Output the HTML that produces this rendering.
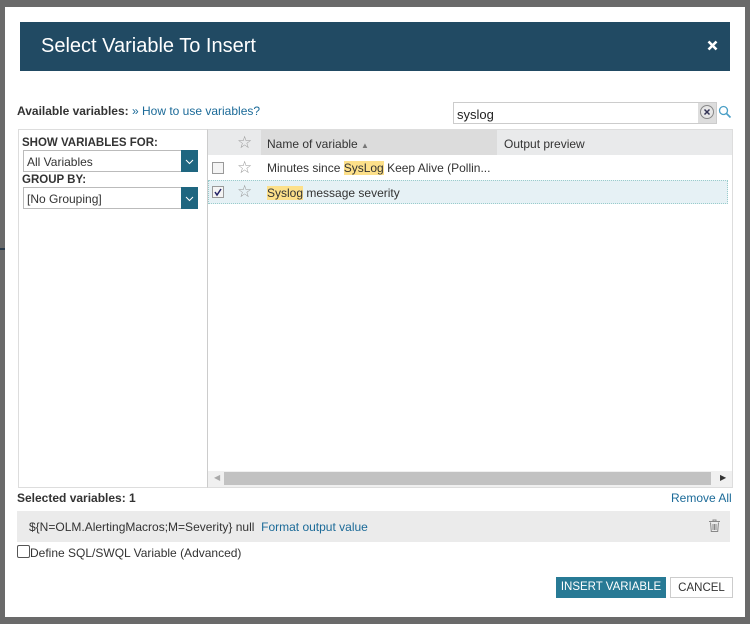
<!DOCTYPE html>
<html><head><style>
*{box-sizing:border-box;margin:0;padding:0}
body{width:750px;height:624px;background:#6a6a6a;font-family:"Liberation Sans",sans-serif;font-size:12px;color:#333;position:relative;overflow:hidden}
.a{position:absolute}
.dlg{left:5px;top:7px;width:740px;height:610px;background:#fff}
.hdr{left:20px;top:22px;width:710px;height:49px;background:#214a63;color:#fff;font-size:20px;padding:13px 0 0 21px}
.lnk{color:#1b6a98}
.sel{border:1px solid #bbb;height:22px;background:#fff;padding:4px 0 0 3px;font-size:12px}
.dd{position:absolute;right:-1px;top:-1px;width:17px;height:22px;background:#1f6680}
.cb{width:12px;height:12px;border:1px solid #999;background:#f4f4f4}
.star{color:#999;font-size:15px}
.hl{background:#fde08a}
</style></head><body>
<div class="a" style="left:0;top:248px;width:5px;height:2px;background:#2a3b4a"></div>
<div class="a dlg"></div>
<div class="a hdr">Select Variable To Insert</div>
<div class="a" style="left:707px;top:40px"><svg width="11" height="11"><path d="M1.5 1.5l8 8M9.5 1.5l-8 8" stroke="#fff" stroke-width="2.6"/></svg></div>
<div class="a" style="left:17px;top:104px;font-size:12px"><b>Available variables:</b> <span class="lnk">» How to use variables?</span></div>
<div class="a" style="left:453px;top:102px;width:264px;height:22px;border:1px solid #ccc;padding:4px 0 0 3px;font-size:13px;color:#222">syslog</div>
<div class="a" style="left:698px;top:103px;width:18px;height:20px;background:#ddd"></div>
<div class="a" style="left:700px;top:105px;width:14px;height:14px;border-radius:50%;border:1px solid #888;background:#e6e6e6"><svg width="12" height="12" style="position:absolute;left:0;top:0"><path d="M3.5 3.5l5 5M8.5 3.5l-5 5" stroke="#335" stroke-width="1.5"/></svg></div>
<div class="a" style="left:718px;top:105px"><svg width="14" height="14"><circle cx="5.5" cy="5.5" r="4" stroke="#4a9fc6" stroke-width="1.3" fill="none"/><path d="M8.5 8.5l4 4" stroke="#4a9fc6" stroke-width="1.6"/></svg></div>
<div class="a" style="left:18px;top:129px;width:190px;height:359px;border:1px solid #ddd"></div>
<div class="a" style="left:22px;top:137px;font-weight:bold;font-size:11.5px">SHOW VARIABLES FOR:</div>
<div class="a sel" style="left:23px;top:150px;width:175px">All Variables<div class="dd"><svg width="17" height="22"><path d="M5 10l3.5 3.5L12 10" stroke="#fff" fill="none"/></svg></div></div>
<div class="a" style="left:22px;top:174px;font-weight:bold;font-size:11.5px">GROUP BY:</div>
<div class="a sel" style="left:23px;top:187px;width:175px">[No Grouping]<div class="dd"><svg width="17" height="22"><path d="M5 10l3.5 3.5L12 10" stroke="#fff" fill="none"/></svg></div></div>
<div class="a" style="left:207px;top:129px;width:526px;height:359px;border:1px solid #ddd;border-left:1px solid #ccc"></div>
<div class="a" style="left:208px;top:130px;width:524px;height:25px;background:#e9eaeb"></div>
<div class="a" style="left:261px;top:130px;width:236px;height:25px;background:#dcdcdc;padding:7px 0 0 6px">Name of variable <span style="font-size:8px;color:#777">▲</span></div>
<div class="a" style="left:504px;top:137px">Output preview</div>
<div class="a star" style="left:237px;top:133px;font-size:17px">☆</div>
<div class="a cb" style="left:212px;top:162px"></div>
<div class="a star" style="left:237px;top:158px;font-size:17px">☆</div>
<div class="a" style="left:267px;top:161px;font-size:12px">Minutes since <span class="hl">SysLog</span> Keep Alive (Pollin...</div>
<div class="a" style="left:208px;top:180px;width:520px;height:24px;background:#e6f1f5;border:1px dotted #9cc"></div>
<div class="a cb" style="left:212px;top:186px"><svg width="10" height="10" style="position:absolute;left:0;top:0"><path d="M2 5l2 3 4-6" stroke="#226" stroke-width="1.5" fill="none"/></svg></div>
<div class="a star" style="left:237px;top:182px;font-size:17px">☆</div>
<div class="a" style="left:267px;top:186px"><span class="hl">Syslog</span> message severity</div>
<div class="a" style="left:208px;top:471px;width:524px;height:16px;background:#f0f0f0"></div>
<div class="a" style="left:224px;top:472px;width:487px;height:13px;background:#c2c2c2"></div>
<div class="a" style="left:214px;top:473px;font-size:8px;color:#aaa">◀</div>
<div class="a" style="left:720px;top:473px;font-size:8px;color:#333">▶</div>
<div class="a" style="left:17px;top:491px;font-weight:bold">Selected variables: 1</div>
<div class="a lnk" style="left:671px;top:491px">Remove All</div>
<div class="a" style="left:17px;top:511px;width:713px;height:31px;background:#ebebeb;padding:9px 0 0 12px">${N=OLM.AlertingMacros;M=Severity} null &nbsp;<span class="lnk">Format output value</span></div>
<div class="a" style="left:709px;top:519px"><svg width="11" height="13"><path d="M0 2.5h11M4 2.5V1h3v1.5M1.5 3.5l.8 9h6.4l.8-9M4 5v6M5.5 5v6M7 5v6" stroke="#888" fill="none"/></svg></div>
<div class="a" style="left:17px;top:545px;width:13px;height:13px;border:1px solid #555;border-radius:2px"></div>
<div class="a" style="left:30px;top:546px">Define SQL/SWQL Variable (Advanced)</div>
<div class="a" style="left:556px;top:577px;width:110px;height:21px;background:#287a95;color:#fff;text-align:center;padding-top:4px;font-size:11.5px">INSERT VARIABLE</div>
<div class="a" style="left:670px;top:577px;width:63px;height:21px;border:1px solid #ccc;color:#333;text-align:center;padding-top:4px;font-size:11.5px">CANCEL</div>
</body></html>
